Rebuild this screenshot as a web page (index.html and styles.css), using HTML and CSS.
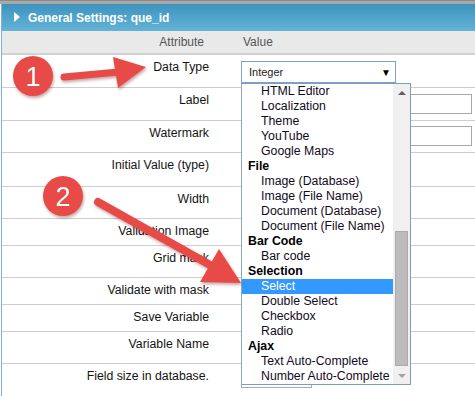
FILE: index.html
```html
<!DOCTYPE html>
<html>
<head>
<meta charset="utf-8">
<link rel="stylesheet" href="styles.css">
</head>
<body>
<div class="topbar"></div>
<div class="panel">
  <div class="panel-head"><span class="caret"></span>General Settings: que_id</div>
  <div class="colhead">
    <div class="attr-h">Attribute</div>
    <div class="val-h">Value</div>
  </div>
  <div class="row h33">
    <div class="attr">Data Type</div>
    <div class="val">
      <div class="select">
        <span>Integer</span><span class="sel-arrow">&#9660;</span>
        <div class="listbox">
          <div class="opts">
            <div class="opt">HTML Editor</div>
            <div class="opt">Localization</div>
            <div class="opt">Theme</div>
            <div class="opt">YouTube</div>
            <div class="opt">Google Maps</div>
            <div class="grp">File</div>
            <div class="opt">Image (Database)</div>
            <div class="opt">Image (File Name)</div>
            <div class="opt">Document (Database)</div>
            <div class="opt">Document (File Name)</div>
            <div class="grp">Bar Code</div>
            <div class="opt">Bar code</div>
            <div class="grp">Selection</div>
            <div class="opt sel">Select</div>
            <div class="opt">Double Select</div>
            <div class="opt">Checkbox</div>
            <div class="opt">Radio</div>
            <div class="grp">Ajax</div>
            <div class="opt">Text Auto-Complete</div>
            <div class="opt">Number Auto-Complete</div>
          </div>
          <div class="scrollbar">
            <div class="sb-btn"><span class="tri-up"></span></div>
            <div class="sb-track"><div class="sb-thumb"></div></div>
            <div class="sb-btn"><span class="tri-down"></span></div>
          </div>
        </div>
      </div>
    </div>
  </div>
  <div class="row h33">
    <div class="attr">Label</div>
    <div class="val"><div class="txt t7"></div></div>
  </div>
  <div class="row h32">
    <div class="attr">Watermark</div>
    <div class="val"><div class="txt t6"></div></div>
  </div>
  <div class="row h34">
    <div class="attr">Initial Value (type)</div>
    <div class="val"></div>
  </div>
  <div class="row h32">
    <div class="attr">Width</div>
    <div class="val"></div>
  </div>
  <div class="row h27">
    <div class="attr">Validation Image</div>
    <div class="val"></div>
  </div>
  <div class="row h32">
    <div class="attr">Grid mask</div>
    <div class="val"></div>
  </div>
  <div class="row h27">
    <div class="attr">Validate with mask</div>
    <div class="val"></div>
  </div>
  <div class="row h27">
    <div class="attr">Save Variable</div>
    <div class="val"></div>
  </div>
  <div class="row h32">
    <div class="attr">Variable Name</div>
    <div class="val"></div>
  </div>
  <div class="row hlast">
    <div class="attr">Field size in database.</div>
    <div class="val"><div class="txt small"></div></div>
  </div>
</div>

<svg class="annot" width="475" height="396" viewBox="0 0 475 396">
  <g class="shadow">
    <line x1="64" y1="77" x2="124" y2="71.5" stroke="#e84b47" stroke-width="7" stroke-linecap="round"/>
    <polygon points="113,57 146,67 118,88" fill="#e84b47"/>
    <circle cx="33" cy="76" r="20" fill="#e84b47"/>
    <text x="33" y="85.5" class="num">1</text>

    <line x1="98" y1="202" x2="212" y2="266" stroke="#e84b47" stroke-width="8" stroke-linecap="round"/>
    <polygon points="219,249 241,283 200,282" fill="#e84b47"/>
    <circle cx="63" cy="196" r="20" fill="#e84b47"/>
    <text x="63" y="205.5" class="num">2</text>
  </g>
</svg>
</body>
</html>
```
FILE: styles.css
```css
html, body {
  margin: 0;
  padding: 0;
  background: #fff;
  font-family: "Liberation Sans", Arial, sans-serif;
  font-size: 12.3px;
  color: #111;
  overflow: hidden;
}

.topbar {
  height: 3px;
  background: #a9a9a9;
  border-top: 1px solid #8a8a8a;
}

.panel {
  margin-left: 1px;
  border-left: 1px solid #7fb3d5;
}

.panel-head {
  height: 27px;
  display: flex;
  align-items: center;
  padding-left: 12px;
  background: linear-gradient(#3d93be, #64b3d7);
  color: #fff;
  font-weight: bold;
  font-size: 12px;
}

.caret {
  width: 0;
  height: 0;
  border-left: 6px solid #fff;
  border-top: 5px solid transparent;
  border-bottom: 5px solid transparent;
  margin-right: 8px;
  margin-top: -2px;
}

.colhead {
  height: 24px;
  box-sizing: border-box;
  display: grid;
  grid-template-columns: 214px 1fr;
  align-items: center;
  background: #e9e9e9;
  border-bottom: 2px solid #d2d2d2;
  color: #555;
  font-size: 12px;
}

.attr-h {
  text-align: right;
  padding-right: 12px;
}

.val-h {
  padding-left: 27px;
}

.row {
  display: grid;
  grid-template-columns: 214px 1fr;
  box-sizing: border-box;
  border-bottom: 1px solid #cdcdcd;
}

.h33 { height: 33px; }
.h32 { height: 32px; }
.h34 { height: 34px; }
.h27 { height: 27px; }
.hlast { height: 40px; border-bottom: none; }

.attr {
  text-align: right;
  padding: 5px 7px 0 0;
  line-height: 15px;
  color: #141414;
}

.val {
  padding-left: 25px;
}

.select {
  position: relative;
  margin-top: 6px;
  width: 155px;
  height: 22px;
  box-sizing: border-box;
  border: 1px solid #7aa0d8;
  display: flex;
  justify-content: space-between;
  align-items: center;
  padding: 0 4px 0 7px;
  font-size: 11px;
  color: #222;
}

.sel-arrow {
  font-size: 10px;
  color: #000;
}

.listbox {
  position: absolute;
  left: -1px;
  top: calc(100% + 1px);
  width: 170px;
  height: 302px;
  box-sizing: border-box;
  border: 1px solid #7f9db9;
  border-left-color: #8aa6c4;
  background: #fff;
  display: flex;
  z-index: 5;
  font-size: 12.3px;
  color: #120a1e;
}

.opts {
  flex: 1;
}

.opt, .grp {
  height: 15px;
  line-height: 15px;
  white-space: nowrap;
}

.opt {
  padding-left: 19px;
}

.grp {
  padding-left: 6px;
  font-weight: bold;
  color: #000;
}

.opt.sel {
  background: #3399ff;
  color: #fff;
}

.scrollbar {
  width: 17px;
  background: #f0f0f0;
  display: flex;
  flex-direction: column;
}

.sb-btn {
  height: 17px;
  display: flex;
  align-items: center;
  justify-content: center;
}

.tri-up {
  width: 0;
  height: 0;
  border-left: 4px solid transparent;
  border-right: 4px solid transparent;
  border-bottom: 4px solid #606060;
}

.tri-down {
  width: 0;
  height: 0;
  border-left: 4px solid transparent;
  border-right: 4px solid transparent;
  border-top: 4px solid #a3a3a3;
}

.sb-track {
  flex: 1;
  display: flex;
  flex-direction: column;
}

.sb-thumb {
  margin: 130px 2px 0 2px;
  height: 135px;
  box-sizing: border-box;
  background: #bcbcbc;
  border: 1px solid #ababab;
}

.txt {
  height: 20px;
  width: 231px;
  box-sizing: border-box;
  border: 1px solid #a9a9a9;
}

.t7 { margin-top: 6px; }
.t6 { margin-top: 5px; }

.txt.small {
  width: 71px;
  height: 18px;
  margin-top: 6px;
}

.annot {
  position: absolute;
  left: 0;
  top: 0;
  pointer-events: none;
  z-index: 10;
}

.shadow {
  filter: drop-shadow(1px 2px 1.5px rgba(90, 0, 0, 0.35));
}

.num {
  font-family: "Liberation Sans", Arial, sans-serif;
  font-size: 27px;
  fill: #fff;
  text-anchor: middle;
}
```
